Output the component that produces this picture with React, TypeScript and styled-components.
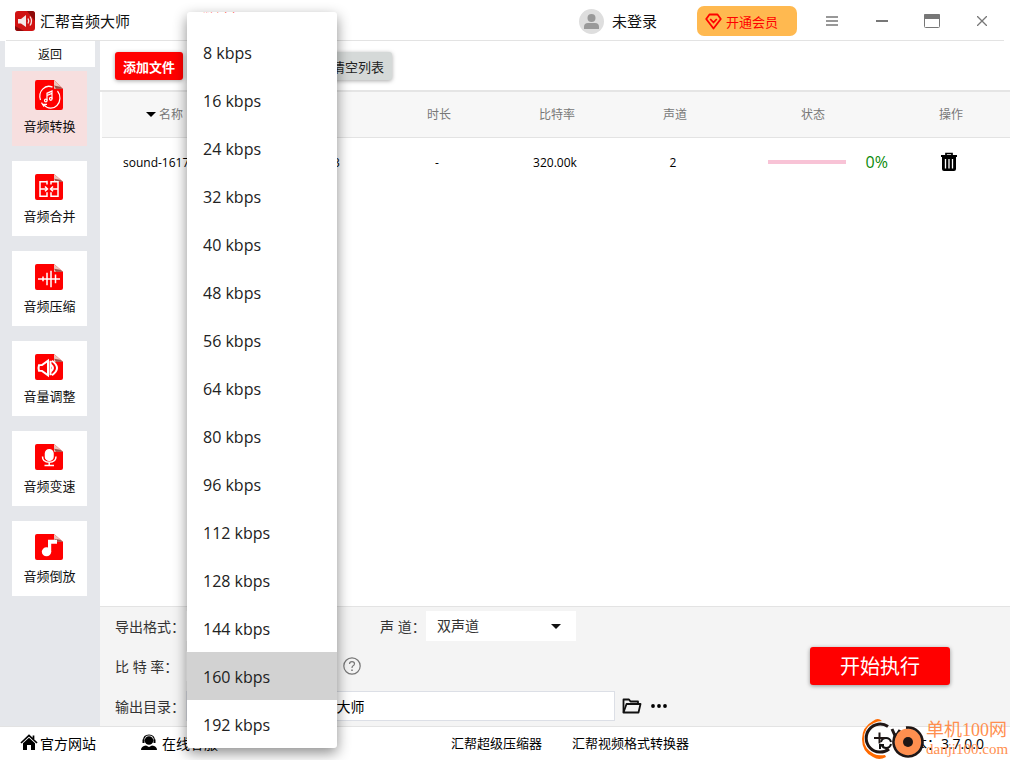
import React from "react";
import styled, { createGlobalStyle, css } from "styled-components";

const GlobalStyle = createGlobalStyle`
  *, *::before, *::after { box-sizing: border-box; }
  body {
    margin: 0;
    background: #fff;
    color: #111;
    font-family: "Open Sans", "Noto Sans CJK SC", sans-serif;
    font-size: 14px;
  }
  button, input, select { font-family: inherit; color: inherit; }
  button { border: 0; padding: 0; background: none; cursor: pointer; }
  a { color: inherit; text-decoration: none; }
  svg { display: block; flex: none; }
`;

const Window = styled.div`
  position: relative;
  display: flex;
  flex-direction: column;
  min-height: 100vh;
`;

/* Title bar */

const TitleBar = styled.header`
  display: flex;
  align-items: center;
  height: 41px;
  margin: 0 6px;
  padding: 2px 12px 0 9px;
  border-bottom: 1px solid #e3e3e3;
`;

const Brand = styled.h1`
  display: flex;
  align-items: center;
  gap: 5px;
  margin: 0 auto 0 0;
  font-size: 15px;
  font-weight: 400;
  line-height: 20px;
`;

const Account = styled.button`
  display: flex;
  align-items: center;
  gap: 8px;
  margin-right: 40px;
  font-size: 15px;
  line-height: 20px;
`;

const VipButton = styled.button`
  display: flex;
  align-items: center;
  gap: 4px;
  width: 100px;
  height: 30px;
  margin-right: 25px;
  padding-left: 8px;
  border-radius: 7px;
  background: #ffb950;
  color: #f00;
  font-size: 13px;
`;

const WindowControls = styled.div`
  display: flex;
  gap: 30px;
`;

const ControlButton = styled.button`
  width: 20px;
  height: 20px;
  display: grid;
  place-items: center;
`;

/* Body */

const Body = styled.div`
  flex: 1;
  display: flex;
  min-height: 0;
`;

const Sidebar = styled.nav`
  flex: none;
  display: flex;
  flex-direction: column;
  width: 100px;
  background: #e5e7eb;
`;

const BackButton = styled.button`
  height: 26px;
  margin: 0 5px 4px;
  background: #fff;
  font-size: 12px;
`;

const ToolList = styled.div`
  display: flex;
  flex-direction: column;
  gap: 15px;
  padding: 0 13px 15px 12px;
`;

const ToolButton = styled.button<{ $active?: boolean }>`
  display: flex;
  flex-direction: column;
  align-items: center;
  gap: 6px;
  height: 75px;
  padding-top: 9px;
  background: ${(p) => (p.$active ? "#f7dfdf" : "#fff")};
  font-size: 13px;
  line-height: 18px;
`;

const IconSlot = styled.span`
  display: flex;
  align-items: flex-end;
  height: 31px;
  padding-right: 1px;
`;

const Main = styled.main`
  flex: 1;
  display: flex;
  flex-direction: column;
  min-width: 0;
`;

const Toolbar = styled.div`
  display: flex;
  align-items: center;
  gap: 6px;
  height: 51px;
  padding: 1px 15px 0;
  border-bottom: 2px solid #e5e5e5;
`;

const ToolbarButton = styled.button<{ $tone: "red" | "gray" }>`
  height: 28px;
  padding: 0 8px;
  border-radius: 3px;
  font-size: 13px;
  box-shadow: 0 1px 4px rgba(0, 0, 0, 0.35);
  ${(p) =>
    p.$tone === "red"
      ? css`
          background: #f00;
          color: #fff;
          font-weight: 700;
        `
      : css`
          background: #d5d9d8;
          color: #222;
        `}
`;

const FileArea = styled.div`
  flex: 1;
  padding-left: 2px;
`;

const FileTable = styled.table`
  width: 100%;
  table-layout: fixed;
  border-collapse: collapse;
  font-size: 12px;

  th {
    height: 45px;
    padding: 0;
    background: #f7f7f7;
    border-bottom: 1px solid #e3e3e3;
    color: #777;
    font-weight: 400;
  }
  th:first-child {
    padding-left: 44px;
    text-align: left;
  }
  td {
    height: 50px;
    padding: 0 4px 0 0;
    text-align: center;
    font-weight: 500;
    color: #000;
  }
  td:first-child {
    padding-left: 21px;
    text-align: left;
    white-space: nowrap;
  }
`;

const SortLabel = styled.span`
  display: flex;
  align-items: center;
  gap: 3px;
`;

const Status = styled.div`
  display: flex;
  align-items: center;
  gap: 20px;
  padding-left: 34px;
  color: #0a8a0a;
  font-size: 16px;
  font-weight: 400;
`;

const Progress = styled.div`
  width: 79px;
  height: 4px;
  background: #f8c3d6;
`;

const IconButton = styled.button`
  display: inline-grid;
  place-items: center;
  vertical-align: middle;
`;

/* Export settings */

const ExportPanel = styled.section`
  display: flex;
  align-items: center;
  justify-content: space-between;
  height: 120px;
  padding: 0 60px 2px 15px;
  border-top: 1px solid #e3e3e3;
  background: #f4f4f4;
`;

const Fields = styled.div`
  display: flex;
  flex-direction: column;
  gap: 10px;
  color: #333;
`;

const FieldRow = styled.div`
  display: flex;
  align-items: center;
  height: 30px;
`;

const FieldLabel = styled.label<{ $wide?: boolean }>`
  width: ${(p) => (p.$wide ? "71px" : "46px")};
  white-space: nowrap;
`;

const SelectBox = styled.span`
  position: relative;
  width: 150px;
  height: 30px;
  background: #fff;

  select {
    width: 100%;
    height: 100%;
    padding: 0 11px;
    border: 0;
    appearance: none;
    background: transparent;
    font-size: 14px;
  }
  svg {
    position: absolute;
    right: 15px;
    top: 13px;
    pointer-events: none;
  }
`;

const Gap = styled.span`
  width: 44px;
`;

const HelpButton = styled(IconButton)`
  margin-left: 7px;
`;

const PathInput = styled.input`
  width: 429px;
  height: 30px;
  margin-right: 7px;
  padding: 0 6px;
  border: 1px solid #dcdfe6;
  background: #fff;
  font-size: 14px;
  color: #000;
`;

const PathButton = styled(IconButton)`
  margin-right: 8px;
`;

const RunButton = styled.button`
  width: 140px;
  height: 38px;
  border-radius: 3px;
  background: #f00;
  color: #fff;
  font-size: 20px;
  box-shadow: 0 1px 4px rgba(0, 0, 0, 0.4);
`;

/* Footer */

const Footer = styled.footer`
  display: flex;
  align-items: center;
  height: 34px;
  padding: 0 26px 2px 20px;
  border-top: 1px solid #e3e3e3;
  color: #000;
`;

const FooterLink = styled.a<{ $small?: boolean; $after: number }>`
  display: flex;
  align-items: center;
  gap: 2px;
  margin-right: ${(p) => p.$after}px;
  font-size: ${(p) => (p.$small ? 13 : 14)}px;
  white-space: nowrap;
`;

const Version = styled.span`
  display: flex;
  align-items: center;
  gap: 6px;
  margin-left: auto;
  white-space: nowrap;
`;

/* Bit rate drop-down list, open over the page */

const RateMenu = styled.ul`
  position: absolute;
  z-index: 2;
  left: 187px;
  top: 12px;
  bottom: 12px;
  width: 150px;
  display: flex;
  flex-direction: column;
  justify-content: flex-end;
  margin: 0;
  padding: 0;
  overflow: hidden;
  list-style: none;
  border-radius: 3px;
  background: #fff;
  box-shadow: 0 5px 14px rgba(0, 0, 0, 0.45);
`;

const RateOption = styled.li<{ $selected?: boolean; $red?: boolean }>`
  flex: none;
  height: 48px;
  padding-left: 16px;
  font-size: 16px;
  line-height: 50px;
  color: ${(p) => (p.$red ? "#f00" : "#222")};
  background: ${(p) => (p.$selected ? "#d2d2d2" : "transparent")};
`;

const Watermark = styled.div`
  position: absolute;
  z-index: 3;
  right: 2px;
  bottom: 0;
  display: flex;
  align-items: center;
  gap: 2px;
  color: #ff8f4f;
  pointer-events: none;
`;

const WatermarkText = styled.div`
  display: flex;
  flex-direction: column;
  width: 82px;
  white-space: nowrap;

  strong {
    font-family: "Liberation Serif", "Noto Sans CJK SC", serif;
    font-weight: 400;
    font-size: 18px;
    line-height: 20px;
  }
  span {
    font-family: "Liberation Serif", serif;
    font-size: 15px;
    line-height: 18px;
  }
`;

/* Drawings */

const LogoIcon = () => (
  <svg width="20" height="20" viewBox="0 0 20 20">
    <rect width="20" height="20" rx="3" fill="#d01212" />
    <path d="M0 15 L9 20 H3 Q0 20 0 17Z M12 0 H17 Q20 0 20 3 V10Z" fill="#8d0a0a" />
    <path d="M3 8 H6 L11 4 V16 L6 12.500 H3Z" fill="#f3e7e7" />
    <path d="M13 7.500 Q14.500 10 13 12.500 M15 5.500 Q18 10 15 14.500" fill="none" stroke="#f3e7e7" strokeWidth="1.300" />
  </svg>
);

const AvatarIcon = () => (
  <svg width="25" height="25" viewBox="0 0 25 25">
    <circle cx="12.500" cy="12.500" r="12.500" fill="#dedede" />
    <circle cx="12.500" cy="9" r="4" fill="#999" />
    <path d="M5 20 V18 Q5 14 9 14 H16 Q20 14 20 18 V20Z" fill="#999" />
  </svg>
);

const DiamondIcon = () => (
  <svg width="17" height="17" viewBox="0 0 17 17" fill="none" stroke="#f00" strokeWidth="1.800" strokeLinejoin="round">
    <path d="M4.500 1.500 H12.500 L15.800 6 L8.500 15.500 L1.200 6Z" />
    <path d="M5.200 6 L8.500 9.500 L11.800 6" />
  </svg>
);

const Caret = ({ color = "#111" }: { color?: string }) => (
  <svg width="10" height="5" viewBox="0 0 10 5">
    <path d="M0 0 H10 L5 5Z" fill={color} />
  </svg>
);

const glyphs: Record<string, React.ReactNode> = {
  convert: (
    <g fill="none" stroke="#fff" strokeWidth="1.200">
      <path d="M5.500 19 A9 9 0 0 1 17.500 7.500 M22.500 11 A9 9 0 0 1 9 23.500" />
      <path d="M6.500 21.500 L9 25 M7 23 H12 M12 19.500 V13 L17 11 V18 M12 15 L17 13" />
      <circle cx="10.800" cy="19.500" r="1.300" />
      <circle cx="15.800" cy="18" r="1.300" />
    </g>
  ),
  merge: (
    <g fill="none" stroke="#fff" strokeWidth="1.500">
      <path d="M12 12 V9 H5 V24 H12 V20 M16 12 V9 H23 V24 H16 V20 M12 8 V12 M5 16.500 H12 M23 16.500 H16" />
      <path d="M10 14 L12.500 16.500 L10 19 M18 14 L15.500 16.500 L18 19" />
    </g>
  ),
  compress: (
    <path
      d="M3 16.500 H25 M8 14 V19 M12 10 V23 M16 8 V25 M20.500 12 V21"
      fill="none"
      stroke="#fff"
      strokeWidth="1.500"
    />
  ),
  volume: (
    <g fill="none" stroke="#fff" strokeWidth="2">
      <path d="M4 12.500 H7 L13 8 V23 L7 18.500 H4 Q3 15.500 4 12.500Z" />
      <path d="M15.500 8 V23 M16 12 Q20 15.500 16 19 M17 8 Q27 15.500 17 23" />
    </g>
  ),
  speed: (
    <g fill="none" stroke="#fff" strokeWidth="1.500">
      <rect x="10.500" y="7" width="7.500" height="11" rx="3.700" fill="#fff" />
      <path d="M7.500 14 Q7.500 20 14.200 20 Q21 20 21 14 M14.200 20 V23 M9.500 23.200 H19" />
    </g>
  ),
  reverse: (
    <g fill="#fff">
      <circle cx="11.500" cy="19.500" r="4.700" />
      <path d="M13 7 H22 V11 H16.200 V20 H13Z" />
    </g>
  ),
};

const FileIcon = ({ name, height }: { name: string; height: number }) => (
  <svg width="28" height={height} viewBox="0 1 28 28" preserveAspectRatio="none">
    <path d="M2 1 H19 L28 9 V26 Q28 28 26 28 H2 Q0 28 0 26 V3 Q0 1 2 1Z" fill="#f00" />
    <path d="M19 1 L28 9 H19Z" fill="#e9c6bd" />
    <path d="M19 6 L21 9 H28 L25 7Z" fill="#7a1b12" opacity="0.7" />
    {glyphs[name]}
  </svg>
);

const TrashIcon = () => (
  <svg width="18" height="20" viewBox="0 0 18 20">
    <path d="M6 3 V1.500 H12 V3" fill="none" stroke="#000" strokeWidth="1.700" />
    <path d="M1 3 H17 V5 H1Z M2 5 H16 V17 Q16 19 14 19 H4 Q2 19 2 17Z" fill="#000" />
    <path d="M5.500 7 V16.500 M9 7 V16.500 M12.500 7 V16.500" stroke="#fff" strokeWidth="1.300" />
  </svg>
);

const HelpIcon = () => (
  <svg width="18" height="18" viewBox="0 0 18 18" fill="none" stroke="#777" strokeWidth="1.200">
    <circle cx="9" cy="9" r="8.200" />
    <path d="M6.500 7 Q6.500 4.600 9 4.600 Q11.500 4.600 11.500 6.800 Q11.500 8.200 9.800 9 Q9 9.500 9 11" />
    <path d="M9 12.500 V14" strokeWidth="1.500" />
  </svg>
);

const FolderIcon = () => (
  <svg width="20" height="16" viewBox="0 0 20 16" fill="none" stroke="#111" strokeWidth="1.800" strokeLinejoin="round">
    <path d="M1.500 14.500 V1.500 H7 L8.500 3.500 H16 V6" />
    <path d="M1.500 14.500 L4.500 6 H18.500 L16.500 14.500Z" />
  </svg>
);

const MoreIcon = () => (
  <svg width="18" height="4" viewBox="0 0 18 4">
    <circle cx="3" cy="2" r="1.900" />
    <circle cx="9" cy="2" r="1.900" />
    <circle cx="15" cy="2" r="1.900" />
  </svg>
);

const HomeIcon = () => (
  <svg width="18" height="17" viewBox="0 0 18 17">
    <path d="M1 9 L9 1.500 L17 9 M13.500 1.500 V5" fill="none" stroke="#000" strokeWidth="1.700" />
    <path d="M3 9.200 L9 3.800 L15 9.200 V16 H11 V11 H7 V16 H3Z" />
  </svg>
);

const ServiceIcon = () => (
  <svg width="20" height="17" viewBox="0 0 20 17">
    <circle cx="9" cy="6.500" r="4.300" />
    <path d="M3.500 7 Q3.500 1 9 1 Q14.500 1 14.500 7" fill="none" stroke="#000" strokeWidth="1.200" />
    <path d="M2.500 5.500 H4.500 V9 H2.500Z M13.500 5.500 H15.500 V9 H13.500Z M1 16 Q1 12 6 11.500 L9 13 L12 11.500 Q17 12 17 16Z" />
  </svg>
);

const UpdateIcon = () => (
  <svg width="14" height="14" viewBox="0 0 14 14" fill="none" stroke="#111" strokeWidth="2">
    <path d="M2 6 Q3 2 7 2 Q11 2 12 6 M12 8 Q11 12 7 12 Q4 12 2.500 9" />
    <path d="M1 13 V9 H5" />
  </svg>
);

const WatermarkLogo = () => (
  <svg width="62" height="42" viewBox="0 0 62 42">
    <path d="M20 3 Q16 -1 11 3 Q0 9 0 21 Q0 34 11 39 Q17 43 24 39 L23 37 Q16 38 12 36 Q2 31 2 21 Q2 9 12 5 Q16 3 20 3Z" fill="#ff6a00" />
    <path d="M26 8.500 A14 14 0 1 0 27 31" fill="none" stroke="#1f1615" strokeWidth="3" />
    <path d="M12 20 H23 M17.500 14.500 V25.500" stroke="#1f1615" strokeWidth="2" />
    <path d="M30 11 L34 20 M38 12 L34 18" stroke="#1f1615" strokeWidth="3" />
    <circle cx="46" cy="24" r="13.500" fill="#ff8f4f" />
    <path d="M44 9.600 A14.500 14.500 0 1 1 34 15.800" fill="none" stroke="#1f1615" strokeWidth="2.600" />
    <circle cx="46" cy="24" r="5" fill="#1f1615" />
  </svg>
);

const tools = [
  { icon: "convert", label: "音频转换" },
  { icon: "merge", label: "音频合并" },
  { icon: "compress", label: "音频压缩" },
  { icon: "volume", label: "音量调整" },
  { icon: "speed", label: "音频变速" },
  { icon: "reverse", label: "音频倒放" },
];

const rates = [8, 16, 24, 32, 40, 48, 56, 64, 80, 96, 112, 128, 144, 160, 192];

export default function App() {
  return (
    <>
      <GlobalStyle />
      <Window>
        <TitleBar>
          <Brand>
            <LogoIcon />
            汇帮音频大师
          </Brand>
          <Account>
            <AvatarIcon />
            未登录
          </Account>
          <VipButton>
            <DiamondIcon />
            开通会员
          </VipButton>
          <WindowControls>
            <ControlButton aria-label="菜单">
              <svg width="12" height="10" viewBox="0 0 12 10">
                <path d="M0 1 H12 M0 5 H12 M0 9 H12" stroke="#777" strokeWidth="1.500" />
              </svg>
            </ControlButton>
            <ControlButton aria-label="最小化">
              <svg width="12" height="2" viewBox="0 0 12 2">
                <rect width="12" height="2" fill="#777" />
              </svg>
            </ControlButton>
            <ControlButton aria-label="最大化">
              <svg width="16" height="14" viewBox="0 0 16 14">
                <rect x="0.500" y="0.500" width="15" height="13" rx="1" fill="none" stroke="#777" />
                <rect width="16" height="5" rx="1" fill="#777" />
              </svg>
            </ControlButton>
            <ControlButton aria-label="关闭">
              <svg width="10" height="10" viewBox="0 0 10 10">
                <path d="M0 0 L10 10 M10 0 L0 10" stroke="#777" strokeWidth="1.300" />
              </svg>
            </ControlButton>
          </WindowControls>
        </TitleBar>

        <Body>
          <Sidebar>
            <BackButton>返回</BackButton>
            <ToolList>
              {tools.map((tool, i) => (
                <ToolButton key={tool.icon} $active={i === 0}>
                  <IconSlot>
                    <FileIcon name={tool.icon} height={i === 0 ? 31 : 27} />
                  </IconSlot>
                  {tool.label}
                </ToolButton>
              ))}
            </ToolList>
          </Sidebar>

          <Main>
            <Toolbar>
              <ToolbarButton $tone="red">添加文件</ToolbarButton>
              <ToolbarButton $tone="red">添加文件夹</ToolbarButton>
              <ToolbarButton $tone="gray">移除</ToolbarButton>
              <ToolbarButton $tone="gray">清空列表</ToolbarButton>
            </Toolbar>

            <FileArea>
              <FileTable>
                <colgroup>
                  <col />
                  <col width="13%" />
                  <col width="13%" />
                  <col width="13%" />
                  <col width="17.4%" />
                  <col width="13%" />
                </colgroup>
                <thead>
                  <tr>
                    <th>
                      <SortLabel>
                        <Caret color="#000" />
                        名称
                      </SortLabel>
                    </th>
                    <th>时长</th>
                    <th>比特率</th>
                    <th>声道</th>
                    <th>状态</th>
                    <th>操作</th>
                  </tr>
                </thead>
                <tbody>
                  <tr>
                    <td>sound-1617-audio-piano-320kbps.mp3</td>
                    <td>-</td>
                    <td>320.00k</td>
                    <td>2</td>
                    <td>
                      <Status>
                        <Progress />
                        0%
                      </Status>
                    </td>
                    <td>
                      <IconButton aria-label="删除">
                        <TrashIcon />
                      </IconButton>
                    </td>
                  </tr>
                </tbody>
              </FileTable>
            </FileArea>

            <ExportPanel>
              <Fields>
                <FieldRow>
                  <FieldLabel $wide htmlFor="format">导出格式：</FieldLabel>
                  <SelectBox>
                    <select id="format">
                      <option>mp3</option>
                    </select>
                    <Caret />
                  </SelectBox>
                  <Gap />
                  <FieldLabel htmlFor="channel">声 道：</FieldLabel>
                  <SelectBox>
                    <select id="channel">
                      <option>双声道</option>
                    </select>
                    <Caret />
                  </SelectBox>
                </FieldRow>
                <FieldRow>
                  <FieldLabel $wide htmlFor="rate">比 特 率：</FieldLabel>
                  <SelectBox>
                    <select id="rate">
                      <option>160 kbps</option>
                    </select>
                    <Caret />
                  </SelectBox>
                  <HelpButton aria-label="帮助">
                    <HelpIcon />
                  </HelpButton>
                </FieldRow>
                <FieldRow>
                  <FieldLabel $wide htmlFor="path">输出目录：</FieldLabel>
                  <PathInput id="path" defaultValue="D:\Programs\汇帮音频大师" />
                  <PathButton aria-label="打开目录">
                    <FolderIcon />
                  </PathButton>
                  <PathButton aria-label="更多">
                    <MoreIcon />
                  </PathButton>
                </FieldRow>
              </Fields>
              <RunButton>开始执行</RunButton>
            </ExportPanel>
          </Main>
        </Body>

        <Footer>
          <FooterLink href="#site" $after={44}>
            <HomeIcon />
            官方网站
          </FooterLink>
          <FooterLink href="#service" $after={233}>
            <ServiceIcon />
            在线客服
          </FooterLink>
          <FooterLink href="#compressor" $small $after={30}>
            汇帮超级压缩器
          </FooterLink>
          <FooterLink href="#converter" $small $after={0}>
            汇帮视频格式转换器
          </FooterLink>
          <Version>
            <UpdateIcon />
            版本：3.7.0.0
          </Version>
        </Footer>

        <RateMenu role="listbox" aria-label="比特率">
          <RateOption role="option" $red>默认</RateOption>
          {rates.map((rate) => (
            <RateOption key={rate} role="option" aria-selected={rate === 160} $selected={rate === 160}>
              {rate} kbps
            </RateOption>
          ))}
        </RateMenu>

        <Watermark>
          <WatermarkLogo />
          <WatermarkText>
            <strong>单机100网</strong>
            <span>danji100.com</span>
          </WatermarkText>
        </Watermark>
      </Window>
    </>
  );
}
